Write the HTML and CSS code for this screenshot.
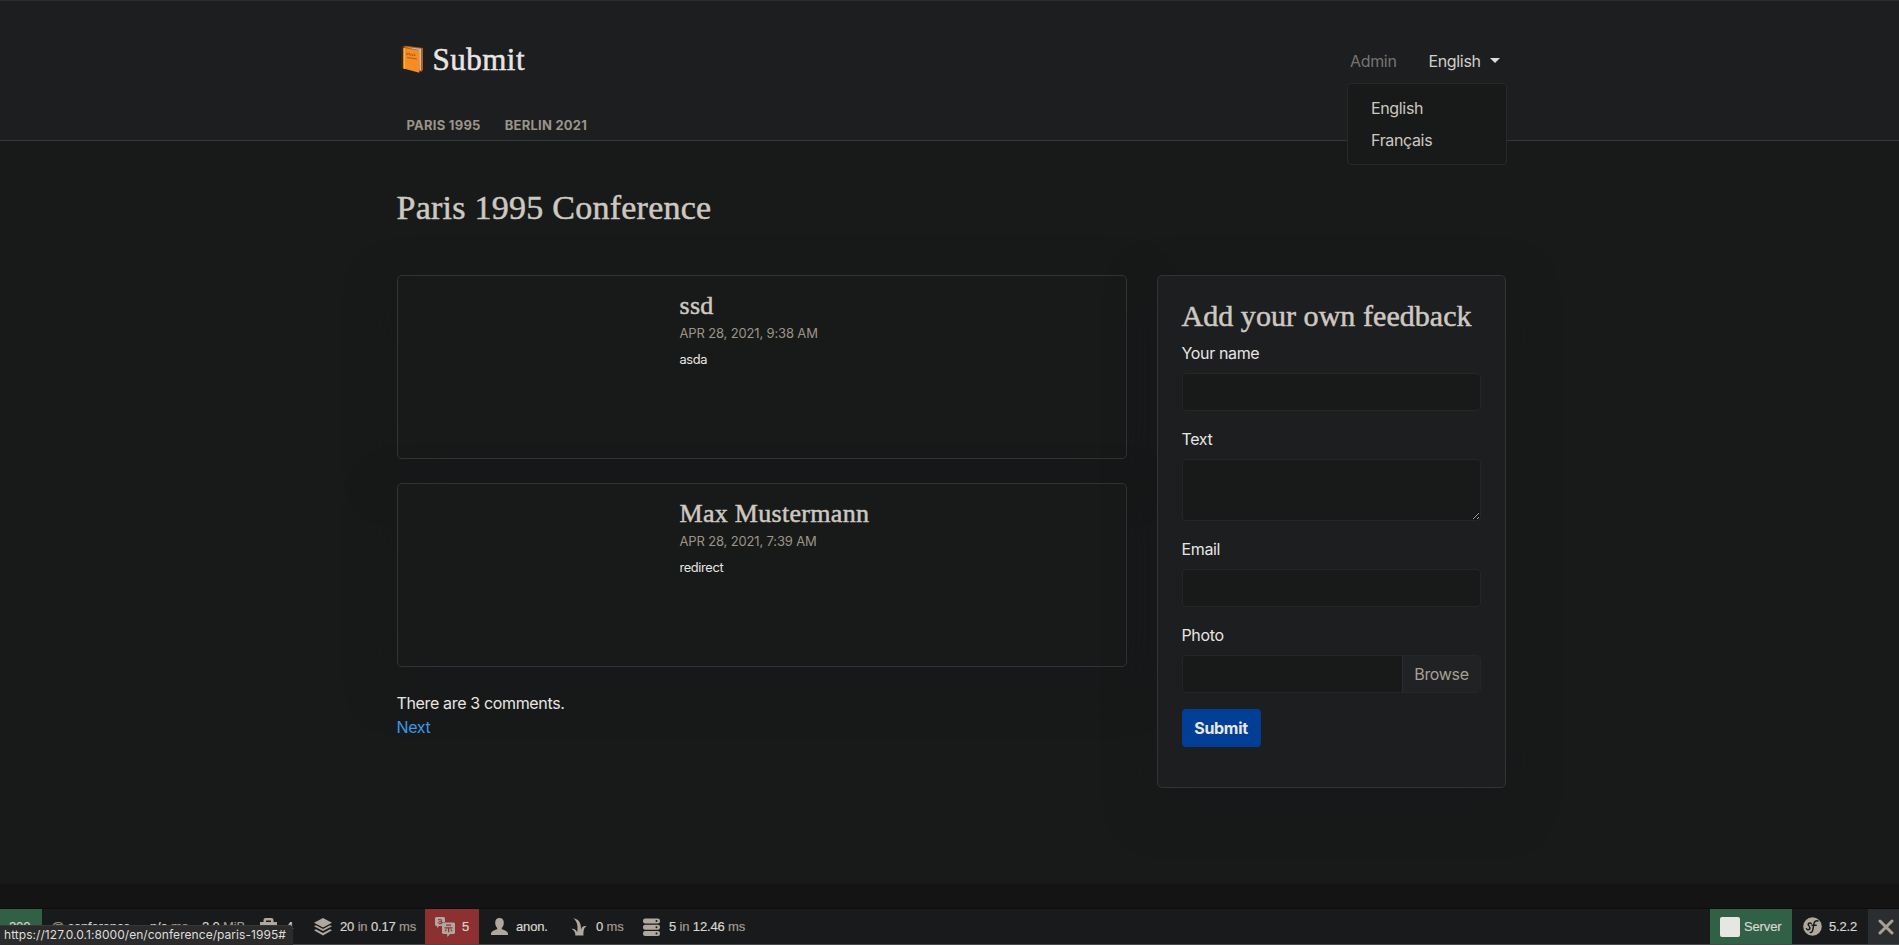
FILE: index.html
```html
<!DOCTYPE html>
<html lang="en">
<head>
<meta charset="utf-8">
<title>Paris 1995 Conference</title>
<link rel="stylesheet" href="styles.css">
</head>
<body>
<header class="header">
  <div class="container topbar">
    <a class="brand">
      <svg class="book" viewBox="0 0 24 29" width="24" height="29">
        <path d="M1 2 3 1v23L1 23z" fill="#3a2609"/>
        <path d="M3 1.500 6 .8 23 3v22l-2 2z" fill="#b65c12"/>
        <path d="m5 2 16 1.700V25l-1.500 1.500L19 5z" fill="#b9c3c7"/>
        <path d="m3.500 3 15.800 2.500v22.300L3.500 23.500z" fill="#f58d22"/>
        <path d="M3.500 3 5 3.300v20.600l-1.500-.4z" fill="#ffb43c"/>
        <path d="m6.500 7.500 1 2.500 1-2m1 0v2h1.500m1-1.500v2h1m1.500-2-.5 2h1.500M7 12.500l10 1.500" stroke="#a84e10" stroke-width=".8" fill="none"/>
      </svg>
      <span class="brand-name">Submit</span>
    </a>
    <nav class="menu">
      <a class="admin">Admin</a>
      <div class="language">
        <a class="toggle">English <i class="caret"></i></a>
        <div class="dropdown"><a>English</a><a>Français</a></div>
      </div>
    </nav>
  </div>
  <nav class="container conferences"><a class="paris">Paris 1995</a><a class="berlin">Berlin 2021</a></nav>
</header>
<main class="container main">
  <h1 class="title">Paris 1995 Conference</h1>
  <div class="columns">
    <section class="comments">
      <article class="comment"><h4>ssd</h4><div class="date">Apr 28, 2021, 9:38 AM</div><p>asda</p></article>
      <article class="comment"><h4>Max Mustermann</h4><div class="date">Apr 28, 2021, 7:39 AM</div><p>redirect</p></article>
      <div class="count">There are 3 comments.</div>
      <a class="next">Next</a>
    </section>
    <aside class="feedback">
      <h3>Add your own feedback</h3>
      <form>
        <label>Your name</label><input class="field" type="text">
        <label>Text</label><textarea class="field area"></textarea>
        <label>Email</label><input class="field" type="text">
        <label>Photo</label><div class="field file"><span class="browse">Browse</span></div>
        <button class="submit" type="button">Submit</button>
      </form>
    </aside>
  </div>
</main>
<footer class="footer"></footer>
<div class="toolbar">
  <div class="item status">200</div>
  <div class="item route"><span><em>@</em> conference</span></div>
  <div class="item time"><span>n/a <em>ms</em></span></div>
  <div class="item memory"><span>2.0 <em>MiB</em></span></div>
  <div class="item forms"><svg width="17" height="18" viewBox="0 0 17 18"><path d="M3.500 2Q3.500 0 5.500 0h6q2 0 2 2v2H17v9h-3.500v5h-10v-5H0V4h3.500zM6 2.500V4h5V2.500zM3 7.500v1.500h11V7.500z" fill-rule="evenodd"/></svg><span>4</span></div>
  <div class="item cache"><svg width="18" height="18" viewBox="0 0 18 18"><path d="m9 0 9 4.700-9 4.700-9-4.700zM0 8.200l2-1 7 3.700 7-3.700 2 1-9 4.700zM0 12.300l2-1 7 3.700 7-3.700 2 1L9 17.500z"/></svg><span>20 <em>in</em> 0.17 <em>ms</em></span></div>
  <div class="item translations"><svg width="20" height="20" viewBox="0 0 20 20"><path d="M1 0h8l1 1v4H7v4H4l-2 2V9H1L0 8V1z"/><path d="M3 2.700h3.300v4H4q-1.500-1.500 0-2h2.300M6.300 6.700l1 .5" fill="none" stroke="#8c3032"/><path d="M8 5.500h11l1 1V16l-1 1h-4l-2.500 3-.5-3H8l-1-1V6.500z"/><path d="M11 8.200h5M9.500 10.800h8M13.600 11v4.200M11.500 12.500l-1.300 1.700m5.500-1.700 1.300 1.700" fill="none" stroke="#8c3032" stroke-width="1.200"/></svg><span>5</span></div>
  <div class="item user"><svg width="17" height="18" viewBox="0 0 17 18"><path d="M8.500 0q4.300 0 4.300 4.800c0 2.500-1 4.200-2 5.200v1.200c3 .8 6.200 2.300 6.200 4.600V17H0v-1.200c0-2.300 3.200-3.800 6.200-4.600V10c-1-1-2-2.700-2-5.200Q4.200 0 8.500 0z"/></svg><span>anon.</span></div>
  <div class="item twig"><svg width="16" height="18" viewBox="0 0 16 18"><path d="M4.300 17.500c.2-3-.7-5-3.800-6.800 2.700-.3 4.300.8 5.700 3.300C7.300 8 6 3 2.200.3 8.200.8 10.300 6 10 12c.6-3 2.300-4.500 5.700-3.800-2.700 1-3.400 4.200-3.200 9.300z"/></svg><span>0 <em>ms</em></span></div>
  <div class="item database"><svg width="18" height="18" viewBox="0 0 18 18"><rect y=".5" x="1" width="17" height="5" rx="2.200"/><rect y="6.700" x="1" width="17" height="5" rx="2.200"/><rect y="13" x="1" width="17" height="5" rx="2.200"/><g fill="#181a1b"><circle cx="14.500" cy="3" r="1"/><circle cx="14.500" cy="9.200" r="1"/><circle cx="14.500" cy="15.500" r="1"/></g></svg><span>5 <em>in</em> 12.46 <em>ms</em></span></div>
  <div class="item server"><i class="square"></i><span>Server</span></div>
  <div class="item symfony"><svg width="19" height="19" viewBox="0 0 19 19"><circle cx="9.500" cy="9.500" r="9.300"/><path d="M8.300 6.500C7 5.300 4.300 6.500 5.500 8.300 6.800 9.800 7.600 10.500 6.600 12c-1 1.300-3 .8-3.100-.2M9 8.200h4.200M7.300 15.500c3 .5 2.700-5.500 3.700-9 .5-2 2-3.300 4-2.500" fill="none" stroke="#181a1b" stroke-width="1.500" stroke-linecap="round"/></svg><span>5.2.2</span></div>
  <div class="item close"><svg width="16" height="16" viewBox="0 0 16 16"><path d="m2 2 12 12M14 2 2 14" fill="none" stroke="#a8a095" stroke-width="3" stroke-linecap="round"/></svg></div>
</div>
<div class="link-status">https://127.0.0.1:8000/en/conference/paris-1995#</div>
</body>
</html>
```
FILE: styles.css
```css
* { box-sizing: border-box; }
html, body { height: 100%; }
body {
  margin: 0; display: flex; flex-direction: column; overflow: hidden;
  background: #181a19; color: #e8e6e3;
  font: 16px/24px Inter, sans-serif; letter-spacing: -0.35px;
}
.container { width: 1110px; margin: 0 0 0 396.5px; }
.header { height: 141px; flex: none; background: #1c1e20; border-top: 1px solid #2c2f31; border-bottom: 1px solid #35393b; }
.topbar { display: flex; justify-content: space-between; height: 107px; }
.brand { display: flex; align-items: flex-start; padding: 44px 0 0 3px; }
.brand-name { margin: -5px 0 0 9px; font: 31px/40px "Liberation Serif", serif; letter-spacing: .5px; -webkit-text-stroke: .5px; }
.menu { display: flex; padding-top: 48px; }
.admin { color: #76746f; }
.language { position: relative; margin-left: 32px; width: 78px; }
.toggle { display: flex; align-items: center; color: #d3cfc9; }
.caret { margin: -2px 0 0 9px; border: 5px solid transparent; border-top-color: #e0ddd8; border-bottom: 0; }
.dropdown {
  position: absolute; right: 0; top: 34px; width: 160px; height: 82px; padding: 8px 23.5px;
  display: flex; flex-direction: column; background: #181a19;
  border: 1px solid #26292a; border-radius: 4px; color: #cdc8c1;
}
.dropdown a { height: 32px; line-height: 32px; }
.conferences { display: flex; gap: 24px; padding-left: 10px; font-size: 13px; line-height: 34px; font-weight: 700; color: #9d9488; text-transform: uppercase; letter-spacing: .25px; }
.main { flex: none; height: 743px; }
.title, .comment h4, .feedback h3 { margin: 0; font-family: "Liberation Serif", serif; font-weight: 400; color: #cdc8c1; -webkit-text-stroke: .5px; }
.title { padding-top: 47px; font-size: 34px; line-height: 40px; letter-spacing: .25px; }
.columns { display: flex; gap: 30px; align-items: flex-start; padding-top: 47px; }
.comments { width: 730px; }
.comment { height: 184px; margin-bottom: 24px; padding: 15px 0 0 282px; border: 1px solid #313436; border-radius: 5px; background: #181a19; box-shadow: 0 16px 48px rgba(22,22,27,.5); }
.comment h4 { font-size: 26px; line-height: 29px; letter-spacing: .3px; }
.date { margin-top: 3px; font-size: 13px; line-height: 20px; color: #9d9488; text-transform: uppercase; letter-spacing: -.15px; }
.comment p { margin: 7px 0 0; font-size: 12.8px; line-height: 20px; letter-spacing: -.35px; }
.next { color: #3e97e3; }
.feedback { width: 349px; height: 513px; padding: 23px 24px; border: 1px solid #313436; border-radius: 5px; background: #1c1e20; box-shadow: 0 16px 48px rgba(22,22,27,.5); }
.feedback h3 { font-size: 30px; line-height: 34px; letter-spacing: .05px; white-space: nowrap; }
.feedback form { display: flex; flex-direction: column; align-items: flex-start; padding-top: 8px; }
.feedback label { margin: 0 0 8px; height: 24px; }
.field { width: 299px; height: 38px; margin: 0 0 16px; padding: 0; background: #181a19; border: 1px solid #242728; border-radius: 4px; outline: 0; }
.area { height: 62px; resize: vertical; }
.file { display: flex; justify-content: flex-end; }
.browse { width: 78px; padding-left: 1px; line-height: 36px; text-align: center; background: #202223; border-left: 1px solid #2a2d2f; color: #a8a095; border-radius: 0 3px 3px 0; }
.submit { width: 79px; height: 38px; padding: 0; border: 0; border-radius: 4px; background: #003f95; color: #e8e6e3; font: 700 16px/38px Inter, sans-serif; letter-spacing: -.3px; }
.footer { flex: none; height: 24px; background: #141414; }
.toolbar { flex: none; height: 37px; display: flex; background: #181a1b; border-top: 1px solid #0e0e0e; border-bottom: 1px solid #47494a; font: 13px/35px "Liberation Sans", sans-serif; letter-spacing: -.15px; color: #d9d5cf; -webkit-text-stroke: .2px; }
.item { display: flex; align-items: center; flex: none; white-space: nowrap; }
.item em { font-style: normal; color: #a39b8f; }
.item svg { fill: #b0a89e; }
.status { width: 42px; padding-left: 9px; background: #306046; }
.route { width: 108px; padding-left: 9px; }
.time { width: 52px; }
.memory { width: 58px; }
.forms { width: 54px; gap: 9px; }
.cache { width: 111px; gap: 8px; }
.translations { width: 54px; padding-left: 10px; gap: 7px; background: #8c3032; }
.user { width: 92px; padding-left: 12px; gap: 8px; }
.twig { width: 71px; gap: 9px; }
.database { width: 110px; gap: 9px; }
.server { width: 82px; margin-left: auto; padding-left: 10px; gap: 4px; background: #306046; }
.square { width: 20px; height: 20px; border-radius: 2px; background: #e8e6e3; }
.symfony { width: 76px; padding-left: 11px; gap: 7px; }
.close { width: 31px; padding-left: 10px; background: #2b2e30; }
.link-status { position: absolute; left: 0; bottom: 0; width: 293px; height: 20px; padding-left: 4px; background: #2b2b2b; border-top: 1px solid #383838; border-radius: 0 4px 0 0; font: 12px/18px Inter, sans-serif; letter-spacing: .05px; white-space: nowrap; color: #dededc; }
```
